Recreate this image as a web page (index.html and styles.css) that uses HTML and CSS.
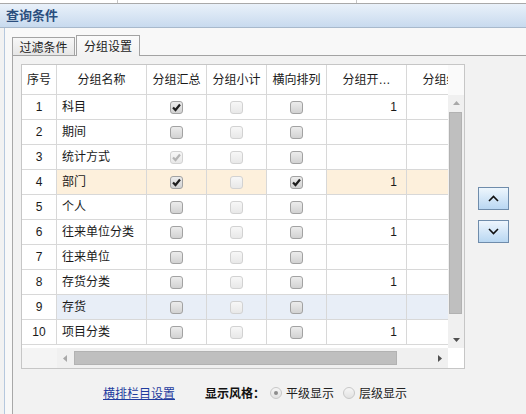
FILE: index.html
```html
<!DOCTYPE html>
<html lang="zh-CN">
<head>
<meta charset="utf-8">
<title>查询条件</title>
<link rel="stylesheet" href="styles.css">
</head>
<body>
<div class="topstrip"><div class="ts ts-a"></div><div class="ts ts-b"></div><div class="ts ts-c"></div></div>
<div class="title">查询条件</div>
<div class="frame">
  <div class="tabbar">
    <div class="tab">过滤条件</div>
    <div class="tab active">分组设置</div>
  </div>
  <div class="panel">
    <div class="work">
      <div class="grid">
        <div class="grid-main">
          <div class="viewport">
            <div class="row head">
              <div class="c">序号</div><div class="c">分组名称</div><div class="c">分组汇总</div><div class="c">分组小计</div><div class="c">横向排列</div><div class="c">分组开…</div><div class="c">分组结…</div>
            </div>
            <div class="row">
              <div class="c idx">1</div><div class="c name">科目</div>
              <div class="c"><span class="cb"><svg viewBox="0 0 11 11"><path d="M2 5.5 L4.5 8 L9 2.5"/></svg></span></div>
              <div class="c"><span class="cb dis"></span></div>
              <div class="c"><span class="cb"></span></div>
              <div class="c num">1</div><div class="c"></div>
            </div>
            <div class="row">
              <div class="c idx">2</div><div class="c name">期间</div>
              <div class="c"><span class="cb"></span></div>
              <div class="c"><span class="cb dis"></span></div>
              <div class="c"><span class="cb"></span></div>
              <div class="c num"></div><div class="c"></div>
            </div>
            <div class="row">
              <div class="c idx">3</div><div class="c name">统计方式</div>
              <div class="c"><span class="cb dis"><svg viewBox="0 0 11 11"><path d="M2 5.5 L4.5 8 L9 2.5"/></svg></span></div>
              <div class="c"><span class="cb dis"></span></div>
              <div class="c"><span class="cb"></span></div>
              <div class="c num"></div><div class="c"></div>
            </div>
            <div class="row sel">
              <div class="c idx">4</div><div class="c name">部门</div>
              <div class="c"><span class="cb"><svg viewBox="0 0 11 11"><path d="M2 5.5 L4.5 8 L9 2.5"/></svg></span></div>
              <div class="c"><span class="cb dis"></span></div>
              <div class="c focus"><span class="cb"><svg viewBox="0 0 11 11"><path d="M2 5.5 L4.5 8 L9 2.5"/></svg></span></div>
              <div class="c num">1</div><div class="c"></div>
            </div>
            <div class="row">
              <div class="c idx">5</div><div class="c name">个人</div>
              <div class="c"><span class="cb"></span></div>
              <div class="c"><span class="cb dis"></span></div>
              <div class="c"><span class="cb"></span></div>
              <div class="c num"></div><div class="c"></div>
            </div>
            <div class="row">
              <div class="c idx">6</div><div class="c name">往来单位分类</div>
              <div class="c"><span class="cb"></span></div>
              <div class="c"><span class="cb dis"></span></div>
              <div class="c"><span class="cb"></span></div>
              <div class="c num">1</div><div class="c"></div>
            </div>
            <div class="row">
              <div class="c idx">7</div><div class="c name">往来单位</div>
              <div class="c"><span class="cb"></span></div>
              <div class="c"><span class="cb dis"></span></div>
              <div class="c"><span class="cb"></span></div>
              <div class="c num"></div><div class="c"></div>
            </div>
            <div class="row">
              <div class="c idx">8</div><div class="c name">存货分类</div>
              <div class="c"><span class="cb"></span></div>
              <div class="c"><span class="cb dis"></span></div>
              <div class="c"><span class="cb"></span></div>
              <div class="c num">1</div><div class="c"></div>
            </div>
            <div class="row hover">
              <div class="c idx">9</div><div class="c name">存货</div>
              <div class="c"><span class="cb"></span></div>
              <div class="c"><span class="cb dis"></span></div>
              <div class="c"><span class="cb"></span></div>
              <div class="c num"></div><div class="c"></div>
            </div>
            <div class="row">
              <div class="c idx">10</div><div class="c name">项目分类</div>
              <div class="c"><span class="cb"></span></div>
              <div class="c"><span class="cb dis"></span></div>
              <div class="c"><span class="cb"></span></div>
              <div class="c num">1</div><div class="c"></div>
            </div>
          </div>
          <div class="vside">
            <div class="vhead"></div>
            <div class="vscroll">
              <div class="sarrow"><svg width="7" height="4" viewBox="0 0 7 4"><path class="tri-off" d="M0 4 L3.5 0 L7 4 Z"/></svg></div>
              <div class="vthumb"></div>
              <div class="vspace"></div>
              <div class="sarrow"><svg width="7" height="4" viewBox="0 0 7 4"><path class="tri" d="M0 0 L7 0 L3.5 4 Z"/></svg></div>
            </div>
          </div>
        </div>
        <div class="hbar">
          <div class="hfrozen"></div>
          <div class="hscroll">
            <div class="harrow"><svg width="4" height="7" viewBox="0 0 4 7"><path class="tri-off" d="M4 0 L0 3.5 L4 7 Z"/></svg></div>
            <div class="hthumb"></div>
            <div class="hspace"></div>
            <div class="harrow"><svg width="4" height="7" viewBox="0 0 4 7"><path class="tri" d="M0 0 L4 3.5 L0 7 Z"/></svg></div>
          </div>
          <div class="corner"></div>
        </div>
      </div>
      <div class="movers">
        <button class="mv" type="button"><svg width="11" height="7" viewBox="0 0 11 7"><path d="M1 6 L5.5 1.5 L10 6"/></svg></button>
        <button class="mv" type="button"><svg width="11" height="7" viewBox="0 0 11 7"><path d="M1 1 L5.5 5.5 L10 1"/></svg></button>
      </div>
    </div>
    <div class="footer">
      <a class="link" href="#">横排栏目设置</a>
      <span class="lbl">显示风格：</span>
      <span class="radio on"></span><span class="opt">平级显示</span>
      <span class="radio"></span><span class="opt">层级显示</span>
    </div>
  </div>
</div>
</body>
</html>
```

FILE: styles.css
```css
* { box-sizing: border-box; }

body {
  margin: 0;
  width: 526px;
  height: 414px;
  overflow: hidden;
  background: #f2f2f2;
  color: #1a1a1a;
  font-family: "Liberation Sans", "Noto Sans CJK SC", sans-serif;
  font-size: 12px;
  line-height: 1;
}

.topstrip {
  display: flex;
  height: 4px;
  background: #ffffff;
  border-bottom: 1px solid #a9a9a9;
}
.ts-a { width: 118px; border-right: 1px solid #c6c6c6; }
.ts-b { width: 239px; border-right: 1px solid #c6c6c6; }
.ts-c { flex: 1; }

.title {
  height: 24px;
  padding-left: 6px;
  border-bottom: 1px solid #a8b9cc;
  background: linear-gradient(#e9f1fa, #c8daee);
  color: #2b4e7e;
  font-family: "Noto Sans CJK SC", sans-serif;
  font-size: 13px;
  font-weight: bold;
  line-height: 22px;
}

.frame {
  height: 386px;
  margin-left: 4px;
  border-left: 1px solid #b6c8de;
  background: #f8f8f8;
}

.tabbar {
  display: flex;
  align-items: flex-end;
  height: 27px;
  padding: 7px 0 0 7px;
}

.tab {
  height: 18px;
  width: 63px;
  border: 1px solid #a3a3a3;
  border-bottom: none;
  background: linear-gradient(#f7f7f7, #e6e6e6);
  display: flex;
  align-items: center;
  justify-content: center;
  font-family: "Noto Sans CJK SC", sans-serif;
  color: #222;
  padding-top: 1px;
}
.tab.active {
  position: relative;
  z-index: 1;
  width: 64px;
  height: 21px;
  margin-left: 1px;
  margin-bottom: -1px;
  background: linear-gradient(#fbfbfb, #f2f2f2);
  padding-top: 0;
}

.panel {
  height: 359px;
  margin-left: 7px;
  border-top: 1px solid #a3a3a3;
  border-left: 1px solid #a8a8a8;
  background: #f2f2f2;
  padding: 8px 0 0 8px;
}

.work { display: flex; }

.grid {
  width: 444px;
  height: 305px;
  border: 1px solid #c6c6c6;
  background: #ffffff;
  display: flex;
  flex-direction: column;
}
.grid-main { display: flex; height: 283px; }
.viewport { width: 426px; height: 283px; overflow: hidden; }

.row {
  display: grid;
  grid-template-columns: 35px 90px 60px 60px 60px 80px 80px;
  width: 465px;
  height: 25px;
}
.row.head { height: 30px; }

.c {
  border-right: 1px solid #d8d8d8;
  border-bottom: 1px solid #d8d8d8;
  display: flex;
  align-items: center;
  justify-content: center;
  white-space: nowrap;
  overflow: hidden;
}
.row.head .c { padding-top: 1px; }
.c.name { justify-content: flex-start; padding-left: 5px; }
.c.num { justify-content: flex-end; padding-right: 9px; }

.row.sel .c { background: #fdf0dc; }
.row.hover .c { background: #e8eef7; }
.row.sel .c.idx, .row.hover .c.idx, .row.sel .c.focus { background: #ffffff; }

.cb {
  width: 13px;
  height: 13px;
  border: 1px solid #a2a2a2;
  border-radius: 3px;
  background: linear-gradient(#ececec, #d2d2d2);
  display: flex;
  align-items: center;
  justify-content: center;
}
.cb.dis {
  border-color: #d2d2d2;
  background: linear-gradient(#f7f7f7, #e8e8e8);
}
.cb svg { width: 11px; height: 11px; }
.cb svg path {
  fill: none;
  stroke: #1e1e1e;
  stroke-width: 2.2;
}
.cb.dis svg path { stroke: #b4b4b4; }

.vside { width: 16px; display: flex; flex-direction: column; }
.vhead { height: 30px; background: #fafafa; }
.vscroll {
  height: 253px;
  background: #f0f0f0;
  display: flex;
  flex-direction: column;
}
.sarrow {
  height: 16px;
  display: flex;
  align-items: center;
  justify-content: center;
}
.vthumb {
  width: 13px;
  height: 202px;
  margin: 1px 0 0 1px;
  background: #bfbfbf;
  border: 1px solid #b2b2b2;
}
.vspace { flex: 1; }

.tri { fill: #505050; }
.tri-off { fill: #a8a8a8; }

.hbar { display: flex; height: 20px; }
.hfrozen { width: 35px; background: #f4f4f4; }
.hscroll {
  width: 391px;
  background: #f0f0f0;
  display: flex;
  align-items: center;
}
.harrow {
  width: 16px;
  height: 16px;
  display: flex;
  align-items: center;
  justify-content: center;
}
.hthumb {
  width: 323px;
  height: 14px;
  margin-left: 1px;
  background: #bfbfbf;
  border: 1px solid #b2b2b2;
}
.hspace { flex: 1; }
.corner { width: 16px; background: #ffffff; }

.movers {
  display: flex;
  flex-direction: column;
  gap: 10px;
  margin-left: 13px;
  padding-top: 123px;
}
.mv {
  width: 31px;
  height: 23px;
  margin: 0;
  padding: 0;
  border: 1px solid #6f8cab;
  background: linear-gradient(#eef6fd, #b9d7f2);
  display: flex;
  align-items: center;
  justify-content: center;
}
.mv svg path {
  fill: none;
  stroke: #111;
  stroke-width: 1.6;
}

.footer {
  display: flex;
  align-items: center;
  height: 18px;
  margin-top: 15px;
  padding-left: 82px;
  font-family: "Noto Sans CJK SC", sans-serif;
}
.link { color: #1f3c9e; text-decoration: underline; }
.lbl { margin-left: 30px; font-weight: bold; color: #111; }
.radio {
  width: 12px;
  height: 12px;
  margin-left: 5px;
  border: 1px solid #c8c8c8;
  border-radius: 50%;
  background: linear-gradient(#f6f6f6, #e2e2e2);
  display: flex;
  align-items: center;
  justify-content: center;
}
.radio.on::after {
  content: "";
  width: 4px;
  height: 4px;
  border-radius: 50%;
  background: #8c8c8c;
}
.opt { margin-left: 4px; color: #222; }
.opt + .radio { margin-left: 9px; }
```
